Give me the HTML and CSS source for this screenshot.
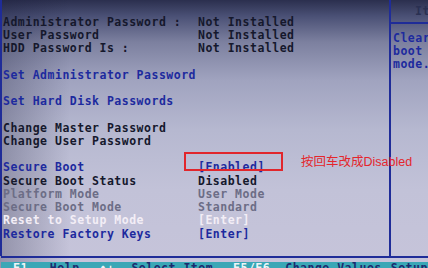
FILE: index.html
```html
<!DOCTYPE html>
<html lang="en">
<head>
<meta charset="utf-8">
<title>Security</title>
<link rel="stylesheet" href="styles.css">
</head>
<body>
<div class="screen">
  <div class="main">
    <div class="group">
      <div class="row dark"><span class="label">Administrator Password :</span><span class="value">Not Installed</span></div>
      <div class="row dark"><span class="label">User Password</span><span class="value">Not Installed</span></div>
      <div class="row dark"><span class="label">HDD Password Is :</span><span class="value">Not Installed</span></div>
    </div>
    <div class="group">
      <div class="row blue"><span class="label">Set Administrator Password</span></div>
    </div>
    <div class="group">
      <div class="row blue"><span class="label">Set Hard Disk Passwords</span></div>
    </div>
    <div class="group">
      <div class="row dark"><span class="label">Change Master Password</span></div>
      <div class="row dark"><span class="label">Change User Password</span></div>
    </div>
    <div class="group">
      <div class="row blue"><span class="label">Secure Boot</span><span class="value">[Enabled]</span></div>
      <div class="row dark"><span class="label">Secure Boot Status</span><span class="value">Disabled</span></div>
      <div class="row grey"><span class="label">Platform Mode</span><span class="value">User Mode</span></div>
      <div class="row grey"><span class="label">Secure Boot Mode</span><span class="value">Standard</span></div>
      <div class="row white"><span class="label">Reset to Setup Mode</span><span class="value">[Enter]</span></div>
      <div class="row blue"><span class="label">Restore Factory Keys</span><span class="value">[Enter]</span></div>
    </div>
  </div>
  <div class="help">
    <div class="help-head">Item Specific Help</div>
    <div class="help-body">Clear<br>boot<br>mode.</div>
  </div>
  <div class="footer">
    <div class="keys">
      <span class="k k1">F1</span><span class="d d1">Help</span><span class="k k2">↑↓</span><span class="d d2">Select Item</span><span class="k k3">F5/F6</span><span class="d d3">Change Values</span><span class="d d4">Setup Defaults</span>
    </div>
  </div>
  <div class="annot-box"></div>
  <div class="annot-text">按回车改成Disabled</div>
</div>
</body>
</html>
```
FILE: styles.css
```css
* { box-sizing: border-box; }
html, body {
  margin: 0;
  padding: 0;
}
body {
  width: 428px;
  height: 268px;
  overflow: hidden;
  font-family: "DejaVu Sans Mono", "Liberation Mono", monospace;
  font-weight: bold;
  font-size: 11.5px;
  letter-spacing: 0.5px;
  background:
    linear-gradient(to right, rgba(20, 22, 50, 0.28), rgba(20, 22, 50, 0) 70px),
    linear-gradient(to bottom, #2b2f4e 0px, #4a5075 16px, #7c809f 42px, #a0a3bf 80px, #b6b8d0 130px, #c2c2d8 190px, #c6c4da 268px);
}
.screen {
  position: relative;
  display: grid;
  grid-template-columns: 389px 1fr;
  grid-template-rows: 256px 1fr;
  height: 268px;
}
.main {
  border-left: 2px solid #1f2c98;
  padding: 15.5px 0 0 1px;
}
.group + .group { margin-top: 13.25px; }
.row {
  display: grid;
  grid-template-columns: 195px auto;
  line-height: 13.25px;
  height: 13.25px;
  white-space: nowrap;
}
.dark { color: #15182c; }
.blue { color: #1d2a9e; }
.grey { color: #6c6d86; }
.white { color: #f3eef6; }

.help {
  border-left: 2px solid #1f2c98;
  overflow: hidden;
}
.help-head {
  height: 24px;
  line-height: 22px;
  border-bottom: 2px solid #1f2c98;
  padding-left: 24px;
  color: #2a3052;
  white-space: nowrap;
}
.help-body {
  padding: 8px 0 0 2px;
  line-height: 13.2px;
  color: #1d2a9e;
}
.footer {
  grid-column: 1 / -1;
  border-top: 2px solid #1f2c98;
  padding-top: 4px;
  margin-left: 1px;
}
.keys {
  height: 6px;
  background: #3aa7b6;
  overflow: hidden;
  white-space: nowrap;
  line-height: 12px;
  padding-left: 12px;
  display: flex;
}
.k { color: #eef6f8; }
.d { color: #1b2a6e; }
.d1 { margin-left: 22px; }
.k2 { margin-left: 20px; }
.d2 { margin-left: 17px; }
.k3 { margin-left: 20px; }
.d3 { margin-left: 15px; }
.d4 { margin-left: 9px; }

.annot-box {
  position: absolute;
  left: 184px;
  top: 152px;
  width: 99px;
  height: 19px;
  border: 2px solid #e1262c;
}
.annot-text {
  position: absolute;
  left: 301px;
  top: 155px;
  font-family: "Liberation Sans", "Noto Sans CJK SC", sans-serif;
  font-weight: normal;
  letter-spacing: 0;
  font-size: 12.5px;
  line-height: 14px;
  color: #e4262c;
  white-space: nowrap;
}
```
